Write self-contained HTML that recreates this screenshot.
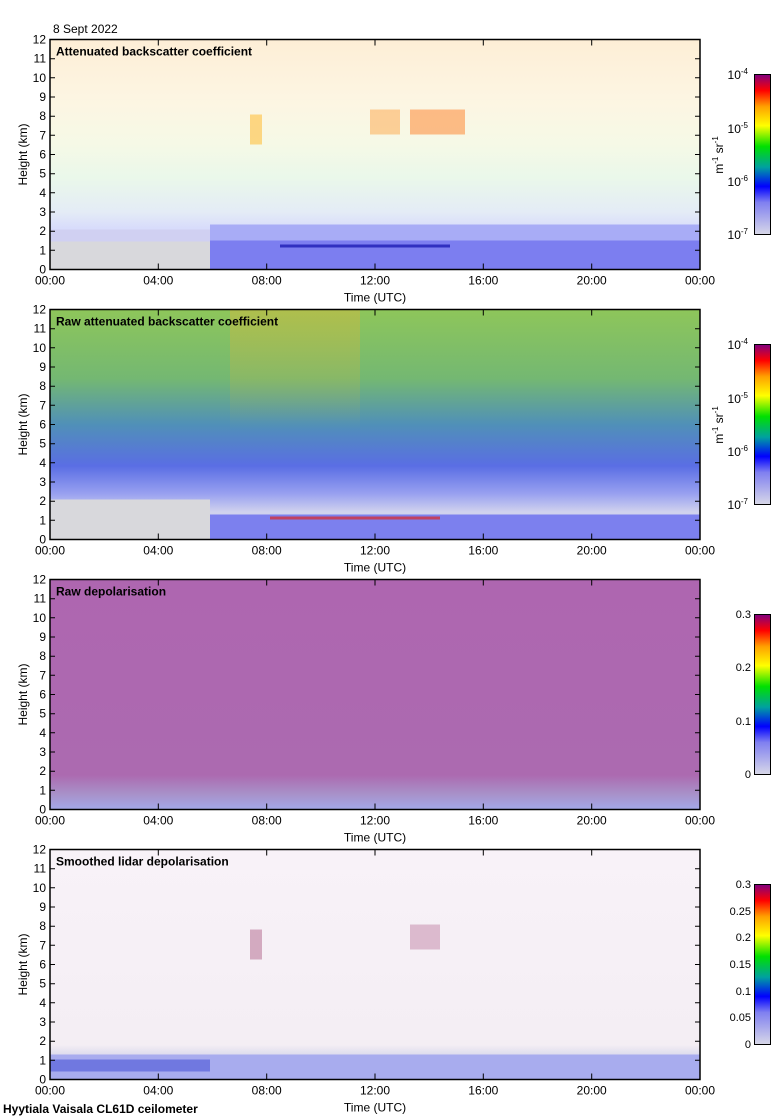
<!DOCTYPE html>
<html><head><meta charset="utf-8"><style>
html,body{margin:0;padding:0;background:#fff;}
svg{display:block;font-family:"Liberation Sans",sans-serif;}
</style></head><body>
<svg width="780" height="1120" viewBox="0 0 780 1120" xmlns="http://www.w3.org/2000/svg">
<defs>
<linearGradient id="g1" x1="0" y1="0" x2="0" y2="1">
<stop offset="0" stop-color="#fdeed6"/><stop offset="0.25" stop-color="#fdf5e2"/>
<stop offset="0.45" stop-color="#f6f9e6"/><stop offset="0.6" stop-color="#eaf8ea"/>
<stop offset="0.75" stop-color="#e4ecf6"/><stop offset="0.82" stop-color="#d8dcfb"/><stop offset="1" stop-color="#c8ccf6"/>
</linearGradient>
<linearGradient id="g2" x1="0" y1="0" x2="0" y2="1">
<stop offset="0" stop-color="#8ec65a"/><stop offset="0.3" stop-color="#74b872"/>
<stop offset="0.5" stop-color="#5090b8"/><stop offset="0.68" stop-color="#5a6ee4"/>
<stop offset="0.8" stop-color="#98a0f0"/><stop offset="0.88" stop-color="#d0d2ee"/><stop offset="1" stop-color="#d4d4e4"/>
</linearGradient>
<linearGradient id="g3" x1="0" y1="0" x2="0" y2="1">
<stop offset="0" stop-color="#ae66b0"/><stop offset="0.85" stop-color="#ac6ab0"/>
<stop offset="0.93" stop-color="#a890c8"/><stop offset="1" stop-color="#a4a8e8"/>
</linearGradient>
<linearGradient id="g4" x1="0" y1="0" x2="0" y2="1">
<stop offset="0" stop-color="#f8f2f8"/><stop offset="0.85" stop-color="#f4eef4"/>
<stop offset="0.9" stop-color="#d8d8ec"/><stop offset="1" stop-color="#a8acec"/>
</linearGradient>
<linearGradient id="cbl" x1="0" y1="1" x2="0" y2="0">
<stop offset="0" stop-color="#d8d8e8"/><stop offset="0.2" stop-color="#8080f0"/>
<stop offset="0.3" stop-color="#0000ff"/><stop offset="0.42" stop-color="#00a0a0"/>
<stop offset="0.55" stop-color="#00e000"/><stop offset="0.68" stop-color="#ffff00"/>
<stop offset="0.8" stop-color="#ffa000"/><stop offset="0.9" stop-color="#ff0000"/><stop offset="1" stop-color="#800080"/>
</linearGradient>
<linearGradient id="hot" x1="0" y1="0" x2="0" y2="1">
<stop offset="0" stop-color="#d0b840" stop-opacity="0.5"/><stop offset="1" stop-color="#d0b840" stop-opacity="0"/>
</linearGradient>
<g id="ax">
<rect x="50" y="0" width="650" height="230" fill="none" stroke="#000" stroke-width="1.5"/>
<path stroke="#000" stroke-width="1" d="M50 210.8h5M50 191.7h5M50 172.5h5M50 153.3h5M50 134.2h5M50 115h5M50 95.8h5M50 76.7h5M50 57.5h5M50 38.3h5M50 19.2h5
M700 210.8h-5M700 191.7h-5M700 172.5h-5M700 153.3h-5M700 134.2h-5M700 115h-5M700 95.8h-5M700 76.7h-5M700 57.5h-5M700 38.3h-5M700 19.2h-5
M158.3 230v-6M266.7 230v-6M375 230v-6M483.3 230v-6M591.7 230v-6
M158.3 0v6M266.7 0v6M375 0v6M483.3 0v6M591.7 0v6"/>
</g>
</defs>

<text x="53" y="33" font-size="12">8 Sept 2022</text>

<!-- Panel 1 -->
<g transform="translate(0,39.5)">
<rect x="50" y="0" width="650" height="230" fill="url(#g1)"/>
<rect x="50" y="200" width="160" height="30" fill="#d8d8dc"/>
<rect x="50" y="190" width="160" height="12" fill="#d0d0f2"/>
<rect x="210" y="200" width="490" height="30" fill="#7c7ef0"/>
<rect x="210" y="185" width="490" height="16" fill="#a8acf6"/>
<rect x="280" y="205" width="170" height="3" fill="#3030c0"/>
<rect x="250" y="75" width="12" height="30" fill="#ffc040" opacity="0.6"/>
<rect x="370" y="70" width="30" height="25" fill="#ff9020" opacity="0.4"/>
<rect x="410" y="70" width="55" height="25" fill="#ff7010" opacity="0.45"/>
<text x="56" y="16" font-size="12" font-weight="bold">Attenuated backscatter coefficient</text>
<use href="#ax"/>
</g>

<!-- Panel 2 -->
<g transform="translate(0,309.5)">
<rect x="50" y="0" width="650" height="230" fill="url(#g2)"/>
<rect x="230" y="0" width="130" height="120" fill="url(#hot)"/>
<rect x="50" y="190" width="160" height="40" fill="#d8d8dc"/>
<rect x="210" y="205" width="490" height="25" fill="#7c80ee"/>
<rect x="270" y="207" width="170" height="3" fill="#c04060"/>
<text x="56" y="16" font-size="12" font-weight="bold">Raw attenuated backscatter coefficient</text>
<use href="#ax"/>
</g>

<!-- Panel 3 -->
<g transform="translate(0,579.5)">
<rect x="50" y="0" width="650" height="230" fill="url(#g3)"/>
<text x="56" y="16" font-size="12" font-weight="bold">Raw depolarisation</text>
<use href="#ax"/>
</g>

<!-- Panel 4 -->
<g transform="translate(0,849.5)">
<rect x="50" y="0" width="650" height="230" fill="url(#g4)"/>
<rect x="50" y="205" width="650" height="25" fill="#a8acee"/>
<rect x="50" y="210" width="160" height="12" fill="#7078e0"/>
<rect x="250" y="80" width="12" height="30" fill="#a04070" opacity="0.4"/>
<rect x="410" y="75" width="30" height="25" fill="#a04070" opacity="0.3"/>
<text x="56" y="16" font-size="12" font-weight="bold">Smoothed lidar depolarisation</text>
<use href="#ax"/>
</g>

<g font-size="12" text-anchor="end">
<g transform="translate(0,39.5)">
<text x="46" y="234">0</text><text x="46" y="214.8">1</text><text x="46" y="195.7">2</text><text x="46" y="176.5">3</text><text x="46" y="157.3">4</text><text x="46" y="138.2">5</text><text x="46" y="119">6</text><text x="46" y="99.8">7</text><text x="46" y="80.7">8</text><text x="46" y="61.5">9</text><text x="46" y="42.3">10</text><text x="46" y="23.2">11</text><text x="46" y="4">12</text>
</g>
<g transform="translate(0,309.5)">
<text x="46" y="234">0</text><text x="46" y="214.8">1</text><text x="46" y="195.7">2</text><text x="46" y="176.5">3</text><text x="46" y="157.3">4</text><text x="46" y="138.2">5</text><text x="46" y="119">6</text><text x="46" y="99.8">7</text><text x="46" y="80.7">8</text><text x="46" y="61.5">9</text><text x="46" y="42.3">10</text><text x="46" y="23.2">11</text><text x="46" y="4">12</text>
</g>
<g transform="translate(0,579.5)">
<text x="46" y="234">0</text><text x="46" y="214.8">1</text><text x="46" y="195.7">2</text><text x="46" y="176.5">3</text><text x="46" y="157.3">4</text><text x="46" y="138.2">5</text><text x="46" y="119">6</text><text x="46" y="99.8">7</text><text x="46" y="80.7">8</text><text x="46" y="61.5">9</text><text x="46" y="42.3">10</text><text x="46" y="23.2">11</text><text x="46" y="4">12</text>
</g>
<g transform="translate(0,849.5)">
<text x="46" y="234">0</text><text x="46" y="214.8">1</text><text x="46" y="195.7">2</text><text x="46" y="176.5">3</text><text x="46" y="157.3">4</text><text x="46" y="138.2">5</text><text x="46" y="119">6</text><text x="46" y="99.8">7</text><text x="46" y="80.7">8</text><text x="46" y="61.5">9</text><text x="46" y="42.3">10</text><text x="46" y="23.2">11</text><text x="46" y="4">12</text>
</g>
</g>

<g font-size="12" text-anchor="middle">
<g transform="translate(0,39.5)">
<text x="50" y="245">00:00</text><text x="158.3" y="245">04:00</text><text x="266.7" y="245">08:00</text><text x="375" y="245">12:00</text><text x="483.3" y="245">16:00</text><text x="591.7" y="245">20:00</text><text x="700" y="245">00:00</text>
<text x="375" y="262">Time (UTC)</text>
<text transform="translate(27,115) rotate(-90)">Height (km)</text>
</g>
<g transform="translate(0,309.5)">
<text x="50" y="245">00:00</text><text x="158.3" y="245">04:00</text><text x="266.7" y="245">08:00</text><text x="375" y="245">12:00</text><text x="483.3" y="245">16:00</text><text x="591.7" y="245">20:00</text><text x="700" y="245">00:00</text>
<text x="375" y="262">Time (UTC)</text>
<text transform="translate(27,115) rotate(-90)">Height (km)</text>
</g>
<g transform="translate(0,579.5)">
<text x="50" y="245">00:00</text><text x="158.3" y="245">04:00</text><text x="266.7" y="245">08:00</text><text x="375" y="245">12:00</text><text x="483.3" y="245">16:00</text><text x="591.7" y="245">20:00</text><text x="700" y="245">00:00</text>
<text x="375" y="262">Time (UTC)</text>
<text transform="translate(27,115) rotate(-90)">Height (km)</text>
</g>
<g transform="translate(0,849.5)">
<text x="50" y="245">00:00</text><text x="158.3" y="245">04:00</text><text x="266.7" y="245">08:00</text><text x="375" y="245">12:00</text><text x="483.3" y="245">16:00</text><text x="591.7" y="245">20:00</text><text x="700" y="245">00:00</text>
<text x="375" y="262">Time (UTC)</text>
<text transform="translate(27,115) rotate(-90)">Height (km)</text>
</g>
</g>

<text x="3" y="1113" font-size="12" font-weight="bold">Hyytiala Vaisala CL61D ceilometer</text>

<g>
<rect x="754.5" y="74.5" width="16" height="160" fill="url(#cbl)" stroke="#000"/>
<rect x="754.5" y="344.5" width="16" height="160" fill="url(#cbl)" stroke="#000"/>
<g font-size="12" text-anchor="end">
<text x="748" y="79">10<tspan font-size="8" dy="-5">-4</tspan></text>
<text x="748" y="133">10<tspan font-size="8" dy="-5">-5</tspan></text>
<text x="748" y="186">10<tspan font-size="8" dy="-5">-6</tspan></text>
<text x="748" y="239">10<tspan font-size="8" dy="-5">-7</tspan></text>
<text x="748" y="349">10<tspan font-size="8" dy="-5">-4</tspan></text>
<text x="748" y="403">10<tspan font-size="8" dy="-5">-5</tspan></text>
<text x="748" y="456">10<tspan font-size="8" dy="-5">-6</tspan></text>
<text x="748" y="509">10<tspan font-size="8" dy="-5">-7</tspan></text>
</g>
<g font-size="12" text-anchor="middle">
<text transform="translate(723,155) rotate(-90)">m<tspan font-size="8" dy="-5">-1</tspan><tspan dy="5"> sr</tspan><tspan font-size="8" dy="-5">-1</tspan></text>
<text transform="translate(723,425) rotate(-90)">m<tspan font-size="8" dy="-5">-1</tspan><tspan dy="5"> sr</tspan><tspan font-size="8" dy="-5">-1</tspan></text>
</g>
</g>

<rect x="754.5" y="614.5" width="16" height="160" fill="url(#cbl)" stroke="#000"/>
<rect x="754.5" y="884.5" width="16" height="160" fill="url(#cbl)" stroke="#000"/>
<g font-size="11" text-anchor="end">
<text x="751" y="778">0</text><text x="751" y="725">0.1</text><text x="751" y="671">0.2</text><text x="751" y="618">0.3</text>
<text x="751" y="1048">0</text><text x="751" y="1021">0.05</text><text x="751" y="995">0.1</text><text x="751" y="968">0.15</text><text x="751" y="941">0.2</text><text x="751" y="915">0.25</text><text x="751" y="888">0.3</text>
</g>
</svg>
</body></html>
